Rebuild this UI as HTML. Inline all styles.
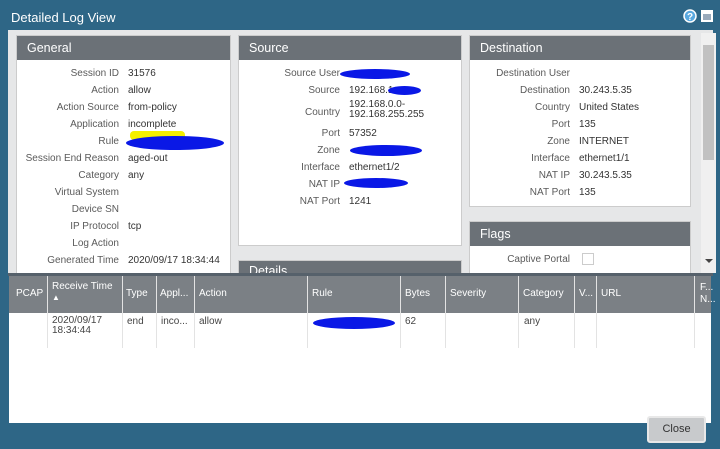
<!DOCTYPE html>
<html><head><style>
*{margin:0;padding:0;box-sizing:border-box}
body{width:720px;height:449px;background:#2e6686;font-family:"Liberation Sans",sans-serif;position:relative;overflow:hidden}
.title{position:absolute;left:11px;top:10px;color:#fff;font-size:13px}
.area{position:absolute;left:8px;top:30px;width:705px;height:244px;background:#e6e7e8}
.panel{position:absolute;background:#fff;border:1px solid #ccc;overflow:hidden}
.ph{background:#6b7177;color:#fff;font-size:12.5px;height:24px;line-height:24px;padding-left:10px}
.row{position:absolute;font-size:10px;color:#333;white-space:nowrap}
.row .l{position:absolute;right:0;color:#5a5a5a;text-align:right}
.blue{position:absolute;background:#0a18e6;border-radius:50%}
.tbl{position:absolute;left:9px;top:276px;width:702px;height:147px;background:#fff}
.th{position:absolute;top:0;height:37px;background:#7b8085;width:702px}
.c{position:absolute;font-size:10px;color:#fff;top:12px}
.td{position:absolute;font-size:10px;color:#444;top:40px}
.vl{position:absolute;top:0;width:1px;height:72px;background:#e3e3e3}
.btn{position:absolute;left:647px;top:416px;width:59px;height:27px;background:#c8cacc;border:2px solid #e8e8e8;border-radius:3px;font-size:11px;color:#333;text-align:center;line-height:23px}
</style></head><body>
<div class="title">Detailed Log View</div>
<svg style="position:absolute;left:683px;top:9px" width="32" height="14"><circle cx="7" cy="7" r="6" fill="#5aa9e0" stroke="#fff" stroke-width="1.5"/><text x="4" y="11" font-size="10" fill="#fff" font-family="Liberation Sans" font-weight="bold">?</text><rect x="18" y="1" width="12" height="12" fill="#fff"/><rect x="20" y="5" width="8" height="6" fill="#9ab"/></svg>
<div class="area"></div>
<div class="panel" style="left:16px;top:35px;width:215px;height:240px"><div class="ph">General</div></div>
<div class="panel" style="left:238px;top:35px;width:224px;height:211px"><div class="ph">Source</div></div>
<div class="panel" style="left:238px;top:260px;width:224px;height:20px"><div class="ph" style="height:14px;line-height:20px">Details</div></div>
<div class="panel" style="left:469px;top:35px;width:222px;height:172px"><div class="ph">Destination</div></div>
<div class="panel" style="left:469px;top:221px;width:222px;height:60px"><div class="ph">Flags</div></div>
<div style="position:absolute;left:701px;top:33px;width:15px;height:240px;background:#f0f0f0"><div style="position:absolute;left:2px;top:12px;width:11px;height:115px;background:#c1c1c1"></div><div style="position:absolute;left:4px;bottom:6px;border:4px solid transparent;border-top-color:#444"></div></div>

<div style="position:absolute;left:0;top:0">
<div class="row" style="left:0;top:68px;width:119px"><span class="l">Session ID</span></div><div class="row" style="left:128px;top:68px">31576</div>
<div class="row" style="left:0;top:85px;width:119px"><span class="l">Action</span></div><div class="row" style="left:128px;top:85px">allow</div>
<div class="row" style="left:0;top:102px;width:119px"><span class="l">Action Source</span></div><div class="row" style="left:128px;top:102px">from-policy</div>
<div class="row" style="left:0;top:119px;width:119px"><span class="l">Application</span></div><div class="row" style="left:128px;top:119px">incomplete</div>
<div class="row" style="left:0;top:136px;width:119px"><span class="l">Rule</span></div>
<div style="position:absolute;left:130px;top:131px;width:55px;height:9px;background:#f4f000;border-radius:4px"></div>
<div class="blue" style="left:126px;top:136px;width:98px;height:14px"></div>
<div class="row" style="left:0;top:153px;width:119px"><span class="l">Session End Reason</span></div><div class="row" style="left:128px;top:153px">aged-out</div>
<div class="row" style="left:0;top:170px;width:119px"><span class="l">Category</span></div><div class="row" style="left:128px;top:170px">any</div>
<div class="row" style="left:0;top:187px;width:119px"><span class="l">Virtual System</span></div>
<div class="row" style="left:0;top:204px;width:119px"><span class="l">Device SN</span></div>
<div class="row" style="left:0;top:221px;width:119px"><span class="l">IP Protocol</span></div><div class="row" style="left:128px;top:221px">tcp</div>
<div class="row" style="left:0;top:238px;width:119px"><span class="l">Log Action</span></div>
<div class="row" style="left:0;top:255px;width:119px"><span class="l">Generated Time</span></div><div class="row" style="left:128px;top:255px">2020/09/17 18:34:44</div>

<div class="row" style="left:0;top:68px;width:340px"><span class="l">Source User</span></div>
<div class="blue" style="left:340px;top:69px;width:70px;height:10px"></div>
<div class="row" style="left:0;top:85px;width:340px"><span class="l">Source</span></div><div class="row" style="left:349px;top:85px">192.168.1</div>
<div class="blue" style="left:388px;top:86px;width:33px;height:9px"></div>
<div class="row" style="left:0;top:107px;width:340px"><span class="l">Country</span></div><div class="row" style="left:349px;top:100px;line-height:10px">192.168.0.0-<br>192.168.255.255</div>
<div class="row" style="left:0;top:128px;width:340px"><span class="l">Port</span></div><div class="row" style="left:349px;top:128px">57352</div>
<div class="row" style="left:0;top:145px;width:340px"><span class="l">Zone</span></div>
<div class="blue" style="left:350px;top:145px;width:72px;height:11px"></div>
<div class="row" style="left:0;top:162px;width:340px"><span class="l">Interface</span></div><div class="row" style="left:349px;top:162px">ethernet1/2</div>
<div class="row" style="left:0;top:179px;width:340px"><span class="l">NAT IP</span></div>
<div class="blue" style="left:344px;top:178px;width:64px;height:10px"></div>
<div class="row" style="left:0;top:196px;width:340px"><span class="l">NAT Port</span></div><div class="row" style="left:349px;top:196px">1241</div>

<div class="row" style="left:0;top:68px;width:570px"><span class="l">Destination User</span></div>
<div class="row" style="left:0;top:85px;width:570px"><span class="l">Destination</span></div><div class="row" style="left:579px;top:85px">30.243.5.35</div>
<div class="row" style="left:0;top:102px;width:570px"><span class="l">Country</span></div><div class="row" style="left:579px;top:102px">United States</div>
<div class="row" style="left:0;top:119px;width:570px"><span class="l">Port</span></div><div class="row" style="left:579px;top:119px">135</div>
<div class="row" style="left:0;top:136px;width:570px"><span class="l">Zone</span></div><div class="row" style="left:579px;top:136px">INTERNET</div>
<div class="row" style="left:0;top:153px;width:570px"><span class="l">Interface</span></div><div class="row" style="left:579px;top:153px">ethernet1/1</div>
<div class="row" style="left:0;top:170px;width:570px"><span class="l">NAT IP</span></div><div class="row" style="left:579px;top:170px">30.243.5.35</div>
<div class="row" style="left:0;top:187px;width:570px"><span class="l">NAT Port</span></div><div class="row" style="left:579px;top:187px">135</div>
<div class="row" style="left:0;top:254px;width:570px"><span class="l">Captive Portal</span></div>
<div style="position:absolute;left:582px;top:253px;width:12px;height:12px;border:1px solid #ccc"></div>
</div>

<div style="position:absolute;left:8px;top:273px;width:705px;height:3px;background:#56616b"></div>
<div class="tbl">
<div class="th"></div>
<div class="c" style="left:7px">PCAP</div>
<div class="c" style="left:43px;top:5px">Receive Time<br><span style="font-size:8px">▲</span></div>
<div class="c" style="left:117px">Type</div>
<div class="c" style="left:151px">Appl...</div>
<div class="c" style="left:190px">Action</div>
<div class="c" style="left:303px">Rule</div>
<div class="c" style="left:396px">Bytes</div>
<div class="c" style="left:441px">Severity</div>
<div class="c" style="left:514px">Category</div>
<div class="c" style="left:570px">V...</div>
<div class="c" style="left:592px">URL</div>
<div class="c" style="left:691px;top:6px;line-height:12px">F...<br>N...</div>
<div class="vl" style="left:38px"></div><div class="vl" style="left:113px"></div><div class="vl" style="left:147px"></div><div class="vl" style="left:185px"></div><div class="vl" style="left:298px"></div><div class="vl" style="left:391px"></div><div class="vl" style="left:436px"></div><div class="vl" style="left:509px"></div><div class="vl" style="left:565px"></div><div class="vl" style="left:587px"></div><div class="vl" style="left:685px"></div>
<div class="td" style="left:43px;line-height:10px">2020/09/17<br>18:34:44</div>
<div class="td" style="left:118px">end</div>
<div class="td" style="left:152px">inco...</div>
<div class="td" style="left:190px">allow</div>
<div class="blue" style="left:304px;top:41px;width:82px;height:12px"></div>
<div class="td" style="left:396px">62</div>
<div class="td" style="left:515px">any</div>
</div>
<div class="btn">Close</div>
</body></html>
